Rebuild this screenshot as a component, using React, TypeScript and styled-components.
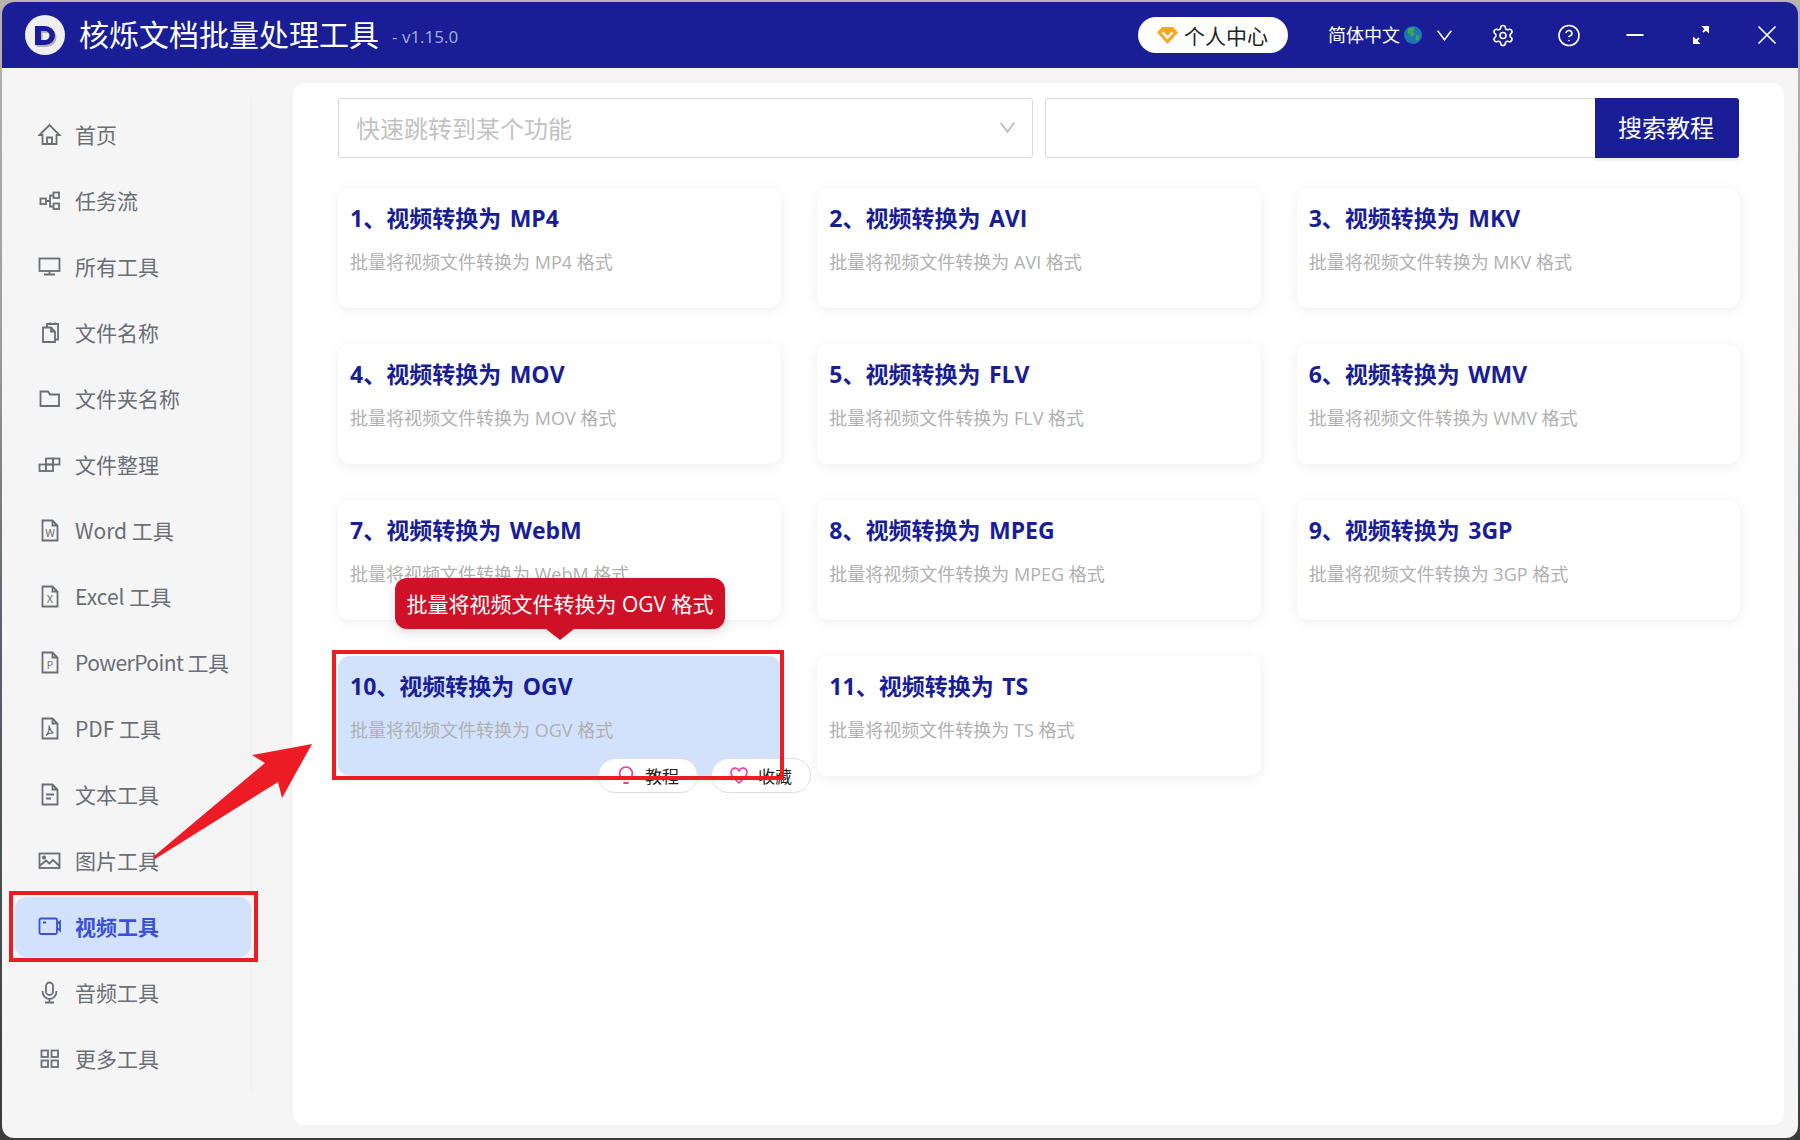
import React from 'react'
import styled, { createGlobalStyle } from 'styled-components'
import { Settings, CircleHelp } from 'lucide-react'

const navy = '#191e96'
const annotationRed = '#ed1c24'
const pink = '#f0389a'

const GlobalStyle = createGlobalStyle`
  html, body {
    margin: 0;
    padding: 0;
    width: 1800px;
    height: 1140px;
    overflow: hidden;
  }
  body {
    background: linear-gradient(180deg, #b9b1ae 0%, #a29a98 30%, #56656b 55%, #3b3b3b 100%);
    font-family: "Open Sans", "Noto Sans CJK SC", sans-serif;
  }
  * {
    box-sizing: border-box;
  }
`

const AppWindow = styled.div`
  position: relative;
  margin: 2px;
  width: 1796px;
  height: 1136px;
  border-radius: 12px;
  background: #f5f5f5;
  display: flex;
  flex-direction: column;
  overflow: hidden;
`

const Header = styled.header`
  height: 66px;
  flex: none;
  background: ${navy};
  display: flex;
  align-items: center;
  padding: 0 19px 0 23px;
  color: #fff;
`

const AppName = styled.h1`
  margin: 0 0 0 14px;
  font-size: 30px;
  font-weight: 400;
  line-height: 40px;
  white-space: nowrap;
`

const Version = styled.span`
  margin: 3px auto 0 13px;
  font-size: 17px;
  color: #a9acd6;
`

const VipPill = styled.button`
  width: 150px;
  height: 36px;
  border: none;
  border-radius: 18px;
  background: #fff;
  color: #222;
  display: flex;
  align-items: center;
  padding: 0 0 0 19px;
  gap: 6px;
  font-family: inherit;
  font-size: 21px;
`

const LangLabel = styled.span`
  margin-left: 40px;
  font-size: 18px;
  line-height: 24px;
  white-space: nowrap;
`

const GlobeWrap = styled.span`
  display: flex;
  margin-left: 4px;
`

const LangChevron = styled.span`
  display: flex;
  margin-left: 15px;
`

const HeaderControls = styled.div`
  display: flex;
  align-items: center;
  gap: 42px;
  margin-left: 39px;
`

const ControlSlot = styled.span`
  width: 24px;
  height: 24px;
  display: flex;
  align-items: center;
  justify-content: center;
`

const Body = styled.div`
  flex: 1;
  display: flex;
  min-height: 0;
`

const Sidebar = styled.aside`
  width: 291px;
  flex: none;
  padding: 30px 0 46px 13px;
`

const Nav = styled.nav`
  width: 237px;
  height: 100%;
  padding-top: 7px;
  border-right: 1px solid #eeeeee;
  display: flex;
  flex-direction: column;
  gap: 6px;
  font-family: "Noto Sans CJK SC", sans-serif;
`

const NavItem = styled.div<{ $active?: boolean }>`
  position: relative;
  width: 236px;
  height: 60px;
  flex: none;
  display: flex;
  align-items: center;
  gap: 13px;
  padding-left: 23px;
  border-radius: 12px;
  background: ${p => (p.$active ? '#d2e2fc' : 'transparent')};
  color: ${p => (p.$active ? '#3a50d6' : '#6a6e75')};
  font-size: 21px;
  font-weight: ${p => (p.$active ? 700 : 400)};
  white-space: nowrap;
`

const NavLabel = styled.span<{ $tight?: boolean }>`
  padding-bottom: 2px;
  letter-spacing: ${p => (p.$tight ? '-0.55px' : 'normal')};
`

const NavIcon = styled.svg`
  width: 24px;
  height: 24px;
  flex: none;
  fill: none;
  stroke: currentColor;
  stroke-width: 1.8;
`

const Main = styled.main`
  width: 1491px;
  margin: 15px 0 13px;
  padding: 15px 44px 0 45px;
  background: #fff;
  border-radius: 12px;
`

const SearchRow = styled.div`
  display: flex;
  height: 60px;
  gap: 12px;
  margin: 0 1px 30px 0;
`

const JumpSelect = styled.div`
  width: 695px;
  height: 60px;
  border: 1px solid #d9d9d9;
  border-radius: 3px;
  display: flex;
  align-items: center;
  justify-content: space-between;
  padding: 0 17px 2px 17px;
  color: #c2c2c2;
  font-size: 24px;
`

const SearchGroup = styled.div`
  flex: 1;
  display: flex;
`

const SearchInput = styled.div`
  flex: 1;
  border: 1px solid #d9d9d9;
  border-right: none;
  border-radius: 3px 0 0 3px;
`

const SearchButton = styled.button`
  width: 144px;
  border: none;
  border-radius: 0 3px 3px 0;
  background: ${navy};
  color: #fff;
  padding: 0 2px 4px 0;
  font-family: inherit;
  font-size: 24px;
  box-shadow: 0 3px 0 #f0f0f0;
`

const ToolGrid = styled.div`
  display: grid;
  grid-template-columns: repeat(3, 1fr);
  grid-auto-rows: 120px;
  gap: 36px;
`

const ToolCard = styled.div<{ $active?: boolean }>`
  position: relative;
  border-radius: 12px;
  padding: 15px 12px 0;
  background: ${p => (p.$active ? '#d2e2fc' : '#fff')};
  box-shadow: 0 2px 14px rgba(0, 0, 0, 0.07);
`

const ToolTitle = styled.div`
  color: ${navy};
  font-size: 23px;
  font-weight: 700;
  line-height: 30px;
  word-spacing: 2.5px;
  white-space: nowrap;
`

const ToolDesc = styled.div`
  margin-top: 14px;
  color: #b0b0b0;
  font-size: 18px;
  line-height: 30px;
  white-space: nowrap;
`

const Tooltip = styled.div`
  position: absolute;
  z-index: 3;
  left: 57px;
  top: -78px;
  width: 330px;
  height: 51px;
  padding-bottom: 2px;
  border-radius: 12px;
  background: #cf1127;
  color: #fff;
  font-size: 21px;
  display: flex;
  align-items: center;
  justify-content: center;
  white-space: nowrap;
  box-shadow: 0 4px 12px rgba(0, 0, 0, 0.12);

  &::after {
    content: '';
    position: absolute;
    left: 50%;
    bottom: -11px;
    margin-left: -14px;
    border-left: 14px solid transparent;
    border-right: 14px solid transparent;
    border-top: 11px solid #cf1127;
  }
`

const PillRow = styled.div`
  position: absolute;
  z-index: 1;
  left: 260px;
  top: 102px;
  display: flex;
  gap: 13px;
`

const ActionPill = styled.div`
  width: 100px;
  height: 35px;
  border: 1px solid #dedede;
  border-radius: 18px;
  background: #fff;
  color: #222;
  font-size: 17px;
  display: flex;
  align-items: center;
  gap: 10px;
  padding-left: 18px;
`

const PillIcon = styled.svg`
  width: 18px;
  height: 19px;
  flex: none;
  fill: none;
  stroke: ${pink};
  stroke-width: 1.5;
`

const RedFrame = styled.div<{ $top: number; $right: number; $bottom: number; $left: number }>`
  position: absolute;
  z-index: 2;
  top: ${p => p.$top}px;
  right: ${p => p.$right}px;
  bottom: ${p => p.$bottom}px;
  left: ${p => p.$left}px;
  border: 4px solid ${annotationRed};
  pointer-events: none;
`

const ArrowOverlay = styled.svg`
  position: absolute;
  z-index: 4;
  left: -2px;
  top: -2px;
  width: 1800px;
  height: 1140px;
  pointer-events: none;
`

const Logo = () => (
  <svg width="40" height="40" viewBox="0 0 40 40">
    <circle cx="20" cy="20" r="20" fill="#efefef" />
    <path
      transform="translate(1.5 2)"
      fillRule="evenodd"
      fill="#b0b0b0"
      d="M10 11H20A10 9.5 0 0 1 20 30H10ZM16 16V25H20A4.5 4.5 0 0 0 20 16Z"
    />
    <path
      fillRule="evenodd"
      fill={navy}
      d="M10 11H20A10 9.5 0 0 1 20 30H10ZM16 16V25H20A4.5 4.5 0 0 0 20 16Z"
    />
  </svg>
)

const Gem = () => (
  <svg width="21" height="17" viewBox="0 0 21 17">
    <path fill="#f5a623" d="M5 0H16L21 5.5 10.5 17 0 5.5Z" />
    <path fill="none" stroke="#fff" strokeWidth="2.4" d="M5.5 5.5L10.5 10.5 15.5 5.5" />
  </svg>
)

const Globe = () => (
  <svg width="18" height="18" viewBox="0 0 18 18">
    <circle cx="9" cy="9" r="9" fill="#1c76b4" />
    <path fill="#3fa653" d="M4 2.5L9 1.2 11 3 9 5.5 10.5 8 8 11 6 8.5 3.5 6.5ZM12 9.5L15.5 9 15 13 12.5 15.5 11.5 12.5Z" />
  </svg>
)

const Chevron = ({ color }: { color: string }) => (
  <svg width="15" height="11" viewBox="0 0 15 11" fill="none">
    <path stroke={color} strokeWidth="1.5" d="M0.7 0.8L7.5 9.8 14.3 0.8" />
  </svg>
)

const Minimize = () => (
  <svg width="24" height="24" viewBox="0 0 24 24" fill="none">
    <path stroke="#fff" strokeWidth="2" d="M3.5 12H20.5" />
  </svg>
)

const Expand = () => (
  <svg width="24" height="24" viewBox="0 0 24 24" fill="none" stroke="#fff" strokeWidth="1.8">
    <path d="M5 20L10 15M14 9L19 4" />
    <path fill="#fff" stroke="none" d="M4 13.5L4 21 11.5 21 9 18.2 6.8 16ZM20 10.5L20 3 12.5 3 15 5.8 17.2 8Z" />
  </svg>
)

const CloseX = () => (
  <svg width="24" height="24" viewBox="0 0 24 24" fill="none">
    <path stroke="#fff" strokeWidth="1.7" d="M3.5 3.5L20.5 20.5M20.5 3.5L3.5 20.5" />
  </svg>
)

const DocPath = 'M4.5 1.5H14.5L19.5 6.5V21.5H4.5Z M14.5 1.5V6.5H19.5'

const navIcons: Record<string, React.ReactNode> = {
  home: <path d="M1.5 12L11.5 2 21.5 12H18.5V21H4.5V12Z M9 21V14.5H14V21" />,
  flow: (
    <>
      <rect x="2.5" y="9.5" width="5.5" height="5.5" />
      <rect x="15.5" y="3.5" width="5.5" height="5.5" />
      <rect x="15.5" y="14.5" width="5.5" height="5.5" />
      <path d="M8 12H12M15.5 6.5H12V17.5H15.5" />
    </>
  ),
  monitor: (
    <>
      <rect x="1.5" y="3.5" width="20" height="12.5" />
      <path d="M11.5 16V19.5M6 19.5H17" />
    </>
  ),
  copy: (
    <>
      <path d="M5 6.5H13L17 10.5V21H5Z M13 6.5V10.5H17" />
      <path d="M9 6.5V3H20V18.5H17 M12 1.5V4 M17 1.5V4" />
    </>
  ),
  folder: <path d="M2.5 4.5H10L12 7.5H21V19H2.5Z" />,
  blocks: (
    <>
      <rect x="1.5" y="11.5" width="6.5" height="6.5" />
      <rect x="8" y="11.5" width="7" height="6.5" />
      <rect x="8" y="5.5" width="7" height="6" />
      <rect x="15" y="5.5" width="6.5" height="6" />
    </>
  ),
  word: (
    <>
      <path d={DocPath} />
      <text x="12" y="18" textAnchor="middle" fontSize="11" stroke="none" fill="currentColor">W</text>
    </>
  ),
  excel: (
    <>
      <path d={DocPath} />
      <text x="12" y="18" textAnchor="middle" fontSize="11" stroke="none" fill="currentColor">X</text>
    </>
  ),
  ppt: (
    <>
      <path d={DocPath} />
      <text x="12" y="18" textAnchor="middle" fontSize="10" stroke="none" fill="currentColor">P</text>
    </>
  ),
  pdf: (
    <>
      <path d={DocPath} />
      <path strokeWidth="1.2" d="M11 8.5C12 12 13 15 15.5 16 13 15.8 10 16.5 8 18.5 10 16.5 11.5 12 11 8.5Z" />
    </>
  ),
  text: (
    <>
      <path d={DocPath} />
      <path d="M8 11.5H16M8 15.5H13" />
    </>
  ),
  image: (
    <>
      <rect x="1.5" y="4.5" width="20" height="14.5" />
      <circle cx="6" cy="8.5" r="1.2" />
      <path d="M2 16.5L8 11.5 11.5 14.5 15 11 21.5 17" />
    </>
  ),
  video: (
    <>
      <rect x="1.5" y="3.5" width="17.5" height="15.5" rx="1.5" />
      <path d="M19 9L22 6.5V15.5L19 13 M5 7.5H8" />
    </>
  ),
  mic: (
    <>
      <rect x="8" y="1.5" width="7" height="12.5" rx="3.5" />
      <path d="M4.5 10C4.5 15 8 18 11.5 18S18.5 15 18.5 10 M11.5 18V21.5M7 21.5H16" />
    </>
  ),
  grid: (
    <>
      <rect x="3.5" y="3.5" width="6.5" height="6.5" />
      <rect x="13.5" y="3.5" width="6.5" height="6.5" />
      <rect x="3.5" y="13.5" width="6.5" height="6.5" />
      <rect x="13.5" y="13.5" width="6.5" height="6.5" />
    </>
  ),
}

const navItems = [
  { icon: 'home', label: '首页' },
  { icon: 'flow', label: '任务流' },
  { icon: 'monitor', label: '所有工具' },
  { icon: 'copy', label: '文件名称' },
  { icon: 'folder', label: '文件夹名称' },
  { icon: 'blocks', label: '文件整理' },
  { icon: 'word', label: 'Word 工具' },
  { icon: 'excel', label: 'Excel 工具' },
  { icon: 'ppt', label: 'PowerPoint 工具', tight: true },
  { icon: 'pdf', label: 'PDF 工具' },
  { icon: 'text', label: '文本工具' },
  { icon: 'image', label: '图片工具' },
  { icon: 'video', label: '视频工具', active: true },
  { icon: 'mic', label: '音频工具' },
  { icon: 'grid', label: '更多工具' },
]

const formats = ['MP4', 'AVI', 'MKV', 'MOV', 'FLV', 'WMV', 'WebM', 'MPEG', '3GP', 'OGV', 'TS']

export default function App() {
  return (
    <>
      <GlobalStyle />
      <AppWindow>
        <Header>
          <Logo />
          <AppName>核烁文档批量处理工具</AppName>
          <Version>- v1.15.0</Version>
          <VipPill>
            <Gem />
            个人中心
          </VipPill>
          <LangLabel>简体中文</LangLabel>
          <GlobeWrap>
            <Globe />
          </GlobeWrap>
          <LangChevron>
            <Chevron color="#fff" />
          </LangChevron>
          <HeaderControls>
            <ControlSlot>
              <Settings size={25} strokeWidth={1.6} color="#fff" />
            </ControlSlot>
            <ControlSlot>
              <CircleHelp size={25} strokeWidth={1.6} color="#fff" />
            </ControlSlot>
            <ControlSlot>
              <Minimize />
            </ControlSlot>
            <ControlSlot>
              <Expand />
            </ControlSlot>
            <ControlSlot>
              <CloseX />
            </ControlSlot>
          </HeaderControls>
        </Header>
        <Body>
          <Sidebar>
            <Nav>
              {navItems.map(item => (
                <NavItem key={item.label} $active={item.active}>
                  <NavIcon viewBox="0 0 24 24">{navIcons[item.icon]}</NavIcon>
                  <NavLabel $tight={item.tight}>{item.label}</NavLabel>
                  {item.active && <RedFrame $top={-6} $right={-7} $bottom={-5} $left={-6} />}
                </NavItem>
              ))}
            </Nav>
          </Sidebar>
          <Main>
            <SearchRow>
              <JumpSelect>
                快速跳转到某个功能
                <Chevron color="#b5b5b5" />
              </JumpSelect>
              <SearchGroup>
                <SearchInput />
                <SearchButton>搜索教程</SearchButton>
              </SearchGroup>
            </SearchRow>
            <ToolGrid>
              {formats.map((format, index) => {
                const active = format === 'OGV'
                return (
                  <ToolCard key={format} $active={active}>
                    <ToolTitle>
                      {index + 1}、视频转换为 {format}
                    </ToolTitle>
                    <ToolDesc>批量将视频文件转换为 {format} 格式</ToolDesc>
                    {active && (
                      <>
                        <Tooltip>批量将视频文件转换为 OGV 格式</Tooltip>
                        <PillRow>
                          <ActionPill>
                            <PillIcon viewBox="0 0 17 18">
                              <path d="M5.5 12.5C3.5 11 2.5 9 2.5 7A6 6 0 0 1 14.5 7C14.5 9 13.5 11 11.5 12.5Z" />
                              <path strokeWidth="2" d="M6 16H11" />
                            </PillIcon>
                            教程
                          </ActionPill>
                          <ActionPill>
                            <PillIcon viewBox="0 0 17 18">
                              <path d="M8.5 16C4 12.5 1 10 1 6.5A3.8 3.8 0 0 1 8.5 5 3.8 3.8 0 0 1 16 6.5C16 10 13 12.5 8.5 16Z" />
                            </PillIcon>
                            收藏
                          </ActionPill>
                        </PillRow>
                        <RedFrame $top={-6} $right={-3} $bottom={-4} $left={-6} />
                      </>
                    )}
                  </ToolCard>
                )
              })}
            </ToolGrid>
          </Main>
        </Body>
        <ArrowOverlay viewBox="0 0 1800 1140">
          <polygon
            fill={annotationRed}
            points="153,857 265,763 252,755 312,744 282,798 278,782 155,859"
          />
        </ArrowOverlay>
      </AppWindow>
    </>
  )
}
